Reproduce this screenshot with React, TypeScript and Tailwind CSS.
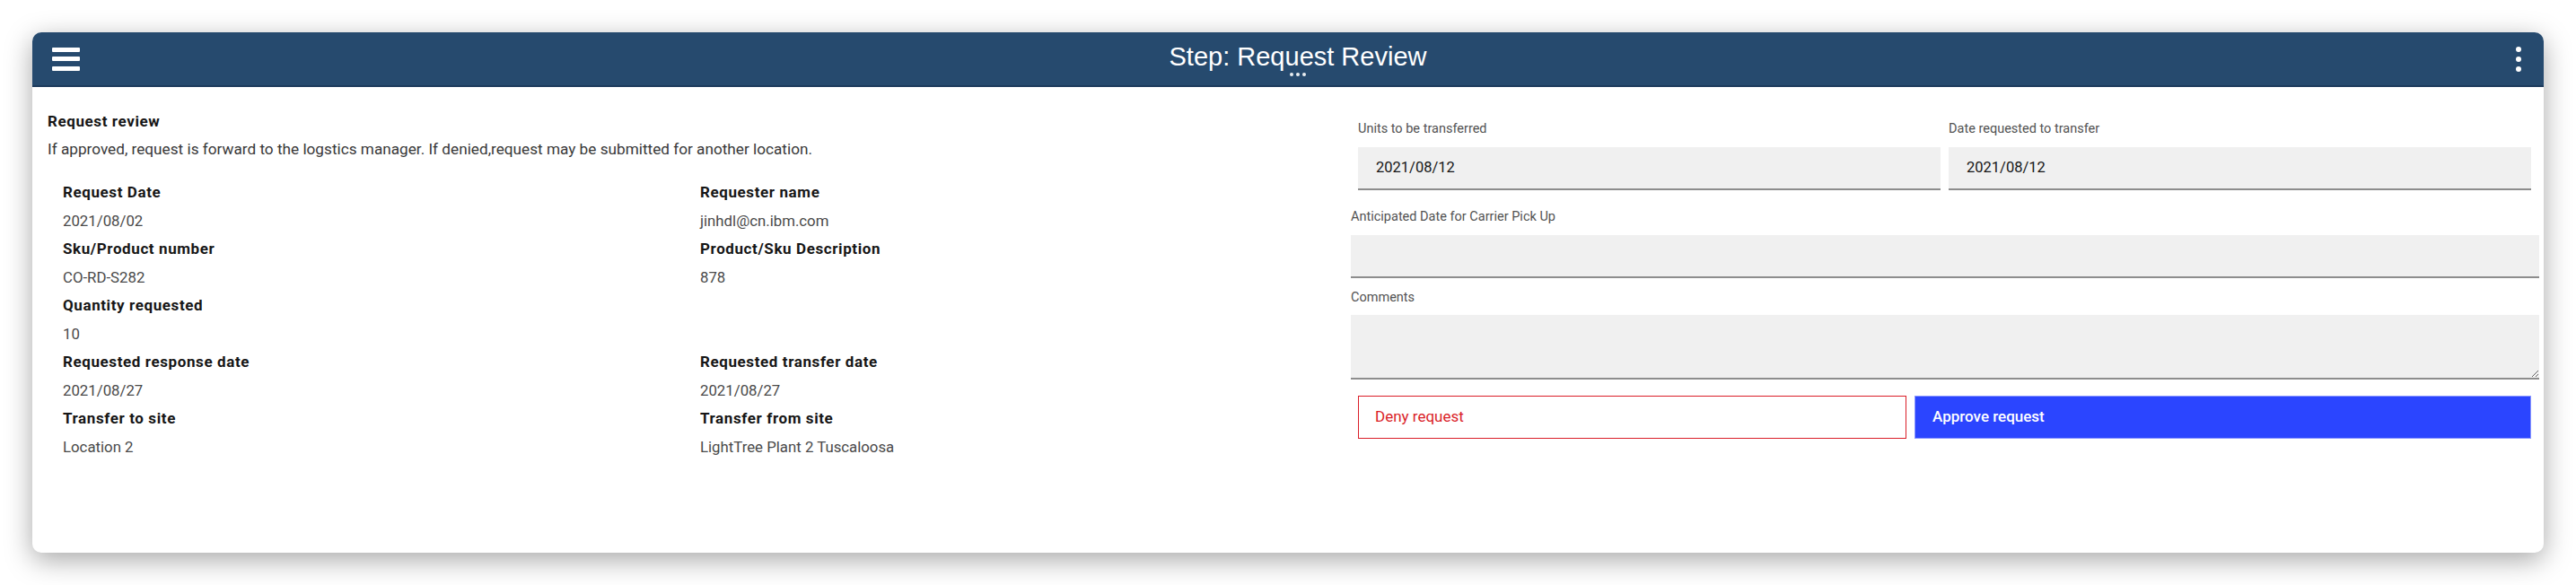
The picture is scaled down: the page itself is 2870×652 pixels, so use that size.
import React from 'react'

const rows: [string, string, string, string][] = [
  ['Request Date', '2021/08/02', 'Requester name', 'jinhdl@cn.ibm.com'],
  ['Sku/Product number', 'CO-RD-S282', 'Product/Sku Description', '878'],
  ['Quantity requested', '10', '', ''],
  ['Requested response date', '2021/08/27', 'Requested transfer date', '2021/08/27'],
  ['Transfer to site', 'Location 2', 'Transfer from site', 'LightTree Plant 2 Tuscaloosa'],
]

function Detail({ label, value }: { label: string; value: string }) {
  if (!label) return <div />
  return (
    <div className="flex flex-col">
      <span className="text-[17px] font-bold leading-[31.5px] tracking-[0.6px] text-[#161616]">{label}</span>
      <span className="text-[16.8px] leading-[31.5px] text-[#4a4a4a]">{value}</span>
    </div>
  )
}

function Field({ label, value, className }: { label: string; value?: string; className?: string }) {
  return (
    <div className={className}>
      <label className="block text-[14.5px] leading-[16px] text-[#525252]">{label}</label>
      <div className="mt-[12px] flex h-[48px] items-center border-b-2 border-[#8d8d8d] bg-[#f0f0f0] pl-[20px] text-[16.5px] text-[#161616]">
        {value}
      </div>
    </div>
  )
}

export default function App() {
  return (
    <div className="h-[652px] w-[2870px] bg-white pl-[36px] pt-[36px] font-['Roboto',sans-serif]">
      <div className="flex h-[580px] w-[2798px] flex-col overflow-hidden rounded-[10px] bg-white shadow-[0_8px_30px_rgba(0,0,0,0.35)]">
        <header className="relative flex h-[61px] shrink-0 items-center justify-between border-b-2 border-[#1d3b5c] bg-[#264a6e] pl-[22px] pr-[25px]">
          <button type="button" className="flex w-[31px] flex-col gap-[5.5px]">
            <span className="h-[5px] w-full rounded-[1px] bg-white" />
            <span className="h-[5px] w-full rounded-[1px] bg-white" />
            <span className="h-[5px] w-full rounded-[1px] bg-white" />
          </button>
          <div className="flex flex-col items-center">
            <h1 className="font-['Liberation_Sans',Arial,sans-serif] text-[29px] leading-[34px] text-white">Step: Request Review</h1>
            <div className="mt-[1px] flex gap-[3px]">
              <span className="h-[4px] w-[4px] rounded-full bg-white/90" />
              <span className="h-[4px] w-[4px] rounded-full bg-white/90" />
              <span className="h-[4px] w-[4px] rounded-full bg-white/90" />
            </div>
          </div>
          <button type="button" className="flex flex-col gap-[5px]">
            <span className="h-[6px] w-[6px] rounded-full bg-white" />
            <span className="h-[6px] w-[6px] rounded-full bg-white" />
            <span className="h-[6px] w-[6px] rounded-full bg-white" />
          </button>
        </header>

        <div className="flex flex-1">
          <section className="w-[1469px] shrink-0 pl-[17px] pt-[28px]">
            <h2 className="text-[17px] font-bold leading-[20px] tracking-[0.6px] text-[#161616]">Request review</h2>
            <p className="mt-[11px] text-[17.2px] leading-[20px] text-[#393939]">
              If approved, request is forward to the logstics manager. If denied,request may be submitted for another location.
            </p>
            <div className="mt-[23px] grid grid-cols-[710px_1fr] pl-[17px]">
              {rows.map(([l1, v1, l2, v2]) => (
                <React.Fragment key={l1}>
                  <Detail label={l1} value={v1} />
                  <Detail label={l2} value={v2} />
                </React.Fragment>
              ))}
            </div>
          </section>

          <section className="flex-1 pr-[5px] pt-[39px]">
            <div className="flex gap-[9px] pl-[8px] pr-[9px]">
              <Field className="flex-1" label="Units to be transferred" value="2021/08/12" />
              <Field className="flex-1" label="Date requested to transfer" value="2021/08/12" />
            </div>
            <Field className="mt-[22px]" label="Anticipated Date for Carrier Pick Up" />
            <div className="mt-[14px]">
              <label className="block text-[14.5px] leading-[16px] text-[#525252]">Comments</label>
              <textarea className="mt-[11px] block h-[72px] w-full border-b-2 border-[#8d8d8d] bg-[#f0f0f0] outline-none" />
            </div>
            <div className="mt-[18px] flex gap-[9px] pl-[8px] pr-[9px]">
              <button
                type="button"
                className="h-[48px] w-[611px] border border-[#da1e28] bg-white pl-[18px] text-left text-[17px] text-[#da1e28]"
              >
                Deny request
              </button>
              <button
                type="button"
                className="h-[48px] flex-1 border border-[#8a97ff] bg-[#2b45ff] pl-[19px] text-left text-[17px] font-medium text-white"
              >
                Approve request
              </button>
            </div>
          </section>
        </div>
      </div>
    </div>
  )
}
